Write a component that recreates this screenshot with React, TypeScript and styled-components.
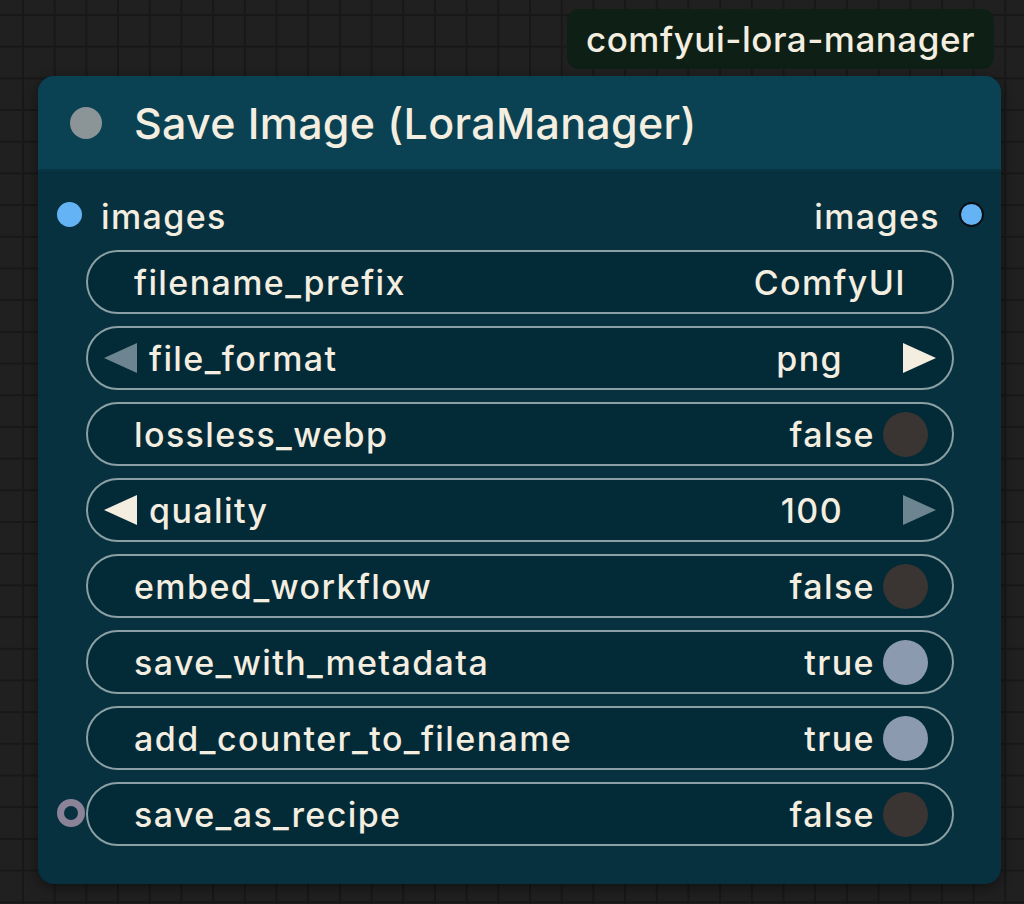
import React from 'react';
import styled, { createGlobalStyle } from 'styled-components';

const GlobalStyle = createGlobalStyle`
  html, body {
    margin: 0;
    padding: 0;
    background: #1f1f1f;
  }
  * {
    box-sizing: border-box;
  }
`;

const Canvas = styled.div`
  position: relative;
  width: 1024px;
  height: 904px;
  overflow: hidden;
  background-color: #202020;
  background-image:
    linear-gradient(to right, #181818 2px, transparent 2px),
    linear-gradient(to bottom, #181818 2px, transparent 2px);
  background-size: 31.7px 31.7px;
  background-position: 22px 14px;
  font-family: Inter, 'Noto Sans', 'Liberation Sans', sans-serif;
  font-weight: 500;
  color: #f3eee0;
`;

const Badge = styled.div`
  position: absolute;
  top: 9px;
  right: 30px;
  height: 60px;
  padding: 0 19px;
  border-radius: 12px;
  background: #0e1f15;
  display: flex;
  align-items: center;
  font-size: 35px;
  letter-spacing: 0.5px;
`;

const Node = styled.div`
  position: absolute;
  left: 38px;
  top: 76px;
  width: 963px;
  height: 808px;
  border-radius: 16px;
  background: #07313f;
  box-shadow: 0 4px 14px rgba(0, 0, 0, 0.45);
  overflow: hidden;
  display: flex;
  flex-direction: column;
`;

const Header = styled.div`
  height: 95px;
  flex-shrink: 0;
  background: #0b4253;
  border-bottom: 2px solid #083645;
  display: flex;
  align-items: center;
  padding-left: 32px;
  gap: 32px;
`;

const StatusDot = styled.span`
  width: 32px;
  height: 32px;
  border-radius: 50%;
  background: #8b9597;
`;

const Title = styled.div`
  font-size: 43px;
  letter-spacing: 0.3px;
`;

const Body = styled.div`
  display: flex;
  flex-direction: column;
  gap: 12px;
  padding: 23px 47px 0 48px;
`;

const IoRow = styled.div`
  position: relative;
  height: 44px;
  margin: 0 -47px 0 -48px;
  padding: 0 61px 0 63px;
  display: flex;
  align-items: center;
  justify-content: space-between;
  font-size: 34px;
  letter-spacing: 1.4px;
`;

const Slot = styled.span<{ $side: 'left' | 'right' }>`
  position: absolute;
  top: 50%;
  ${(p) => (p.$side === 'left' ? 'left: 19px;' : 'right: 17px;')}
  width: 25px;
  height: 25px;
  margin-top: -14px;
  border-radius: 50%;
  background: #64b4f5;
  border: ${(p) => (p.$side === 'right' ? '2px solid #0a0f14' : 'none')};
`;

const Widget = styled.div`
  position: relative;
  height: 64px;
  border: 2px solid #8aa0a4;
  border-radius: 32px;
  background: #032a37;
  display: flex;
  align-items: center;
  padding: 0 24px 0 46px;
  font-size: 34px;
  letter-spacing: 1.4px;
`;

const Label = styled.span`
  flex: 1;
  white-space: nowrap;
`;

const Value = styled.span<{ $pad?: number }>`
  white-space: nowrap;
  margin-right: ${(p) => p.$pad ?? 0}px;
`;

const Arrow = styled.span<{ $dir: 'left' | 'right'; $active: boolean }>`
  width: 0;
  height: 0;
  border-top: 15px solid transparent;
  border-bottom: 15px solid transparent;
  ${(p) =>
    p.$dir === 'left'
      ? `border-right: 33px solid ${p.$active ? '#f3eee0' : '#6c8590'};`
      : `border-left: 33px solid ${p.$active ? '#f3eee0' : '#6c8590'};`}
`;

const Toggle = styled.span<{ $on: boolean }>`
  width: 45px;
  height: 45px;
  border-radius: 50%;
  margin-left: 8px;
  background: ${(p) => (p.$on ? '#8b9aaf' : '#3a3433')};
`;

const RecipeSlot = styled.span`
  position: absolute;
  left: -31px;
  top: 50%;
  margin-top: -15px;
  width: 28px;
  height: 28px;
  border-radius: 50%;
  border: 7px solid #8b8397;
  background: #07313f;
`;

type Field =
  | { kind: 'text'; name: string; value: string }
  | { kind: 'combo'; name: string; value: string; canLeft: boolean; canRight: boolean }
  | { kind: 'toggle'; name: string; value: boolean; slot?: boolean };

const fields: Field[] = [
  { kind: 'text', name: 'filename_prefix', value: 'ComfyUI' },
  { kind: 'combo', name: 'file_format', value: 'png', canLeft: false, canRight: true },
  { kind: 'toggle', name: 'lossless_webp', value: false },
  { kind: 'combo', name: 'quality', value: '100', canLeft: true, canRight: false },
  { kind: 'toggle', name: 'embed_workflow', value: false },
  { kind: 'toggle', name: 'save_with_metadata', value: true },
  { kind: 'toggle', name: 'add_counter_to_filename', value: true },
  { kind: 'toggle', name: 'save_as_recipe', value: false, slot: true },
];

const ComboWidget = styled(Widget)`
  padding: 0 16px 0 16px;
  gap: 12px;
`;

const renderField = (f: Field) => {
  if (f.kind === 'combo') {
    return (
      <ComboWidget key={f.name}>
        <Arrow $dir="left" $active={f.canLeft} />
        <Label>{f.name}</Label>
        <Value $pad={48}>{f.value}</Value>
        <Arrow $dir="right" $active={f.canRight} />
      </ComboWidget>
    );
  }
  if (f.kind === 'toggle') {
    return (
      <Widget key={f.name}>
        {f.slot && <RecipeSlot />}
        <Label>{f.name}</Label>
        <Value>{f.value ? 'true' : 'false'}</Value>
        <Toggle $on={f.value} />
      </Widget>
    );
  }
  return (
    <Widget key={f.name}>
      <Label>{f.name}</Label>
      <Value $pad={22}>{f.value}</Value>
    </Widget>
  );
};

const App: React.FC = () => {
  return (
    <>
      <GlobalStyle />
      <Canvas>
        <Badge>comfyui-lora-manager</Badge>
        <Node>
          <Header>
            <StatusDot />
            <Title>Save Image (LoraManager)</Title>
          </Header>
          <Body>
            <IoRow>
              <Slot $side="left" />
              <span>images</span>
              <span>images</span>
              <Slot $side="right" />
            </IoRow>
            {fields.map(renderField)}
          </Body>
        </Node>
      </Canvas>
    </>
  );
};

export default App;
